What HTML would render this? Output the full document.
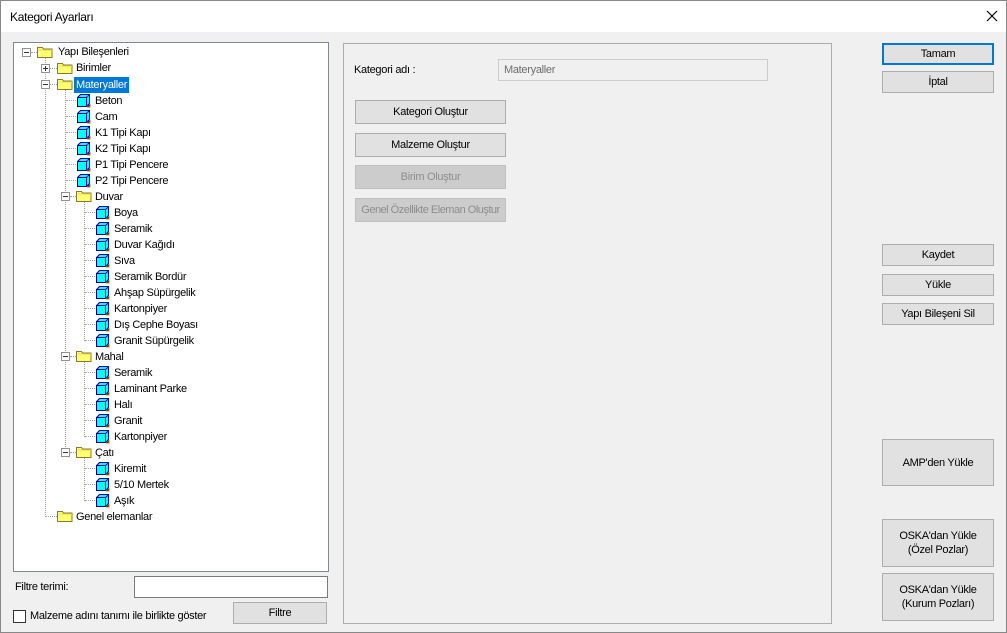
<!DOCTYPE html>
<html><head><meta charset="utf-8"><style>
*{box-sizing:border-box;margin:0;padding:0}
body{width:1007px;height:633px;background:#f0f0f0;font-family:"Liberation Sans",sans-serif;font-size:11px;letter-spacing:-0.3px;color:#000;position:relative;overflow:hidden;border:1px solid #888}
.a{position:absolute}
.title{left:0;top:0;width:1005px;height:31px;background:#fff}
.btn{position:absolute;background:#e1e1e1;border:1px solid #adadad;text-align:center;display:flex;align-items:center;justify-content:center;line-height:14px;white-space:nowrap}
.dis{color:#8d8d8d;background:#cccccc;border-color:#bfbfbf}
.tree{left:12px;top:41px;width:316px;height:530px;background:#fff;border:1px solid #828790}
.r{position:absolute;height:16px;line-height:16px;white-space:nowrap}
.vl{position:absolute;width:0;border-left:1px dotted #a0a0a0}
.hl{position:absolute;height:0;border-top:1px dotted #a0a0a0}
.ex{position:absolute;width:9px;height:9px;border:1px solid #919191;background:#fff}
.ex:before{content:"";position:absolute;left:1px;top:3px;width:5px;height:1px;background:#333}
.ex.p:after{content:"";position:absolute;left:3px;top:1px;width:1px;height:5px;background:#333}
.f{position:absolute;width:16px;height:12px}
.m{position:absolute;width:15px;height:15px}
</style></head><body>
<div class="a title"></div>
<div class="a" style="left:9px;top:9px;font-size:12px">Kategori Ayarları</div>
<svg class="a" style="left:985px;top:9px" width="12" height="12"><path d="M1 1L11 11M11 1L1 11" stroke="#000" stroke-width="1.2"/></svg>

<div class="a tree">
<svg width="0" height="0" style="position:absolute"><defs>
<symbol id="fo" viewBox="0 0 16 12"><path d="M0.5 1.5h5l1 1.5h8.5v8.5h-14.5z" fill="#ffff70" stroke="#8a7a30"/><path d="M1 4h14" stroke="#e8d850"/></symbol>
<symbol id="mt" viewBox="0 0 15 15"><path d="M1.5 4.5l3-3h9v9l-3 3h-9z" fill="#00ffff" stroke="#0000a0"/><path d="M1.5 4.5h9v9M10.5 4.5l3-3" fill="none" stroke="#0000a0"/><path d="M11 14h3v-3" stroke="#c08000"/></symbol>
</defs></svg>
</div>
<div class="a" style="left:0;top:0">
<div class="vl" style="left:44px;top:56px;height:460px"></div>
<div class="vl" style="left:64px;top:88px;height:364px"></div>
<div class="vl" style="left:83px;top:200px;height:140px"></div>
<div class="vl" style="left:83px;top:360px;height:76px"></div>
<div class="vl" style="left:83px;top:456px;height:44px"></div>
<div class="hl" style="left:30px;top:51px;width:6px"></div>
</div>
<div class="a" style="left:0;top:0">
<div class="ex" style="left:21px;top:47px"></div><svg class="f" style="left:36px;top:45px"><use href="#fo"/></svg><div class="r" style="left:57px;top:43px">Yapı Bileşenleri</div>
<div class="hl" style="left:49px;top:67px;width:7px"></div><div class="ex p" style="left:40px;top:63px"></div><svg class="f" style="left:56px;top:61px"><use href="#fo"/></svg><div class="r" style="left:75px;top:59px">Birimler</div>
<div class="hl" style="left:49px;top:83px;width:7px"></div><div class="ex" style="left:40px;top:79px"></div><svg class="f" style="left:56px;top:77px"><use href="#fo"/></svg><div class="r" style="left:73px;top:76px;background:#0078d7;color:#fff;padding:0 2px">Materyaller</div>
<div class="hl" style="left:65px;top:99px;width:10px"></div><svg class="m" style="left:75px;top:92px"><use href="#mt"/></svg><div class="r" style="left:94px;top:92px">Beton</div>
<div class="hl" style="left:65px;top:115px;width:10px"></div><svg class="m" style="left:75px;top:108px"><use href="#mt"/></svg><div class="r" style="left:94px;top:108px">Cam</div>
<div class="hl" style="left:65px;top:131px;width:10px"></div><svg class="m" style="left:75px;top:124px"><use href="#mt"/></svg><div class="r" style="left:94px;top:124px">K1 Tipi Kapı</div>
<div class="hl" style="left:65px;top:147px;width:10px"></div><svg class="m" style="left:75px;top:140px"><use href="#mt"/></svg><div class="r" style="left:94px;top:140px">K2 Tipi Kapı</div>
<div class="hl" style="left:65px;top:163px;width:10px"></div><svg class="m" style="left:75px;top:156px"><use href="#mt"/></svg><div class="r" style="left:94px;top:156px">P1 Tipi Pencere</div>
<div class="hl" style="left:65px;top:179px;width:10px"></div><svg class="m" style="left:75px;top:172px"><use href="#mt"/></svg><div class="r" style="left:94px;top:172px">P2 Tipi Pencere</div>
<div class="hl" style="left:69px;top:195px;width:6px"></div><div class="ex" style="left:60px;top:191px"></div><svg class="f" style="left:75px;top:189px"><use href="#fo"/></svg><div class="r" style="left:94px;top:188px">Duvar</div>
<div class="hl" style="left:84px;top:211px;width:10px"></div><svg class="m" style="left:94px;top:204px"><use href="#mt"/></svg><div class="r" style="left:113px;top:204px">Boya</div>
<div class="hl" style="left:84px;top:227px;width:10px"></div><svg class="m" style="left:94px;top:220px"><use href="#mt"/></svg><div class="r" style="left:113px;top:220px">Seramik</div>
<div class="hl" style="left:84px;top:243px;width:10px"></div><svg class="m" style="left:94px;top:236px"><use href="#mt"/></svg><div class="r" style="left:113px;top:236px">Duvar Kağıdı</div>
<div class="hl" style="left:84px;top:259px;width:10px"></div><svg class="m" style="left:94px;top:252px"><use href="#mt"/></svg><div class="r" style="left:113px;top:252px">Sıva</div>
<div class="hl" style="left:84px;top:275px;width:10px"></div><svg class="m" style="left:94px;top:268px"><use href="#mt"/></svg><div class="r" style="left:113px;top:268px">Seramik Bordür</div>
<div class="hl" style="left:84px;top:291px;width:10px"></div><svg class="m" style="left:94px;top:284px"><use href="#mt"/></svg><div class="r" style="left:113px;top:284px">Ahşap Süpürgelik</div>
<div class="hl" style="left:84px;top:307px;width:10px"></div><svg class="m" style="left:94px;top:300px"><use href="#mt"/></svg><div class="r" style="left:113px;top:300px">Kartonpiyer</div>
<div class="hl" style="left:84px;top:323px;width:10px"></div><svg class="m" style="left:94px;top:316px"><use href="#mt"/></svg><div class="r" style="left:113px;top:316px">Dış Cephe Boyası</div>
<div class="hl" style="left:84px;top:339px;width:10px"></div><svg class="m" style="left:94px;top:332px"><use href="#mt"/></svg><div class="r" style="left:113px;top:332px">Granit Süpürgelik</div>
<div class="hl" style="left:69px;top:355px;width:6px"></div><div class="ex" style="left:60px;top:351px"></div><svg class="f" style="left:75px;top:349px"><use href="#fo"/></svg><div class="r" style="left:94px;top:348px">Mahal</div>
<div class="hl" style="left:84px;top:371px;width:10px"></div><svg class="m" style="left:94px;top:364px"><use href="#mt"/></svg><div class="r" style="left:113px;top:364px">Seramik</div>
<div class="hl" style="left:84px;top:387px;width:10px"></div><svg class="m" style="left:94px;top:380px"><use href="#mt"/></svg><div class="r" style="left:113px;top:380px">Laminant Parke</div>
<div class="hl" style="left:84px;top:403px;width:10px"></div><svg class="m" style="left:94px;top:396px"><use href="#mt"/></svg><div class="r" style="left:113px;top:396px">Halı</div>
<div class="hl" style="left:84px;top:419px;width:10px"></div><svg class="m" style="left:94px;top:412px"><use href="#mt"/></svg><div class="r" style="left:113px;top:412px">Granit</div>
<div class="hl" style="left:84px;top:435px;width:10px"></div><svg class="m" style="left:94px;top:428px"><use href="#mt"/></svg><div class="r" style="left:113px;top:428px">Kartonpiyer</div>
<div class="hl" style="left:69px;top:451px;width:6px"></div><div class="ex" style="left:60px;top:447px"></div><svg class="f" style="left:75px;top:445px"><use href="#fo"/></svg><div class="r" style="left:94px;top:444px">Çatı</div>
<div class="hl" style="left:84px;top:467px;width:10px"></div><svg class="m" style="left:94px;top:460px"><use href="#mt"/></svg><div class="r" style="left:113px;top:460px">Kiremit</div>
<div class="hl" style="left:84px;top:483px;width:10px"></div><svg class="m" style="left:94px;top:476px"><use href="#mt"/></svg><div class="r" style="left:113px;top:476px">5/10 Mertek</div>
<div class="hl" style="left:84px;top:499px;width:10px"></div><svg class="m" style="left:94px;top:492px"><use href="#mt"/></svg><div class="r" style="left:113px;top:492px">Aşık</div>
<div class="hl" style="left:45px;top:515px;width:11px"></div><svg class="f" style="left:56px;top:509px"><use href="#fo"/></svg><div class="r" style="left:75px;top:508px">Genel elemanlar</div>
</div>

<div class="a" style="left:14px;top:580px">Filtre terimi:</div>
<div class="a" style="left:133px;top:575px;width:194px;height:22px;background:#fff;border:1px solid #7a7a7a"></div>
<div class="a" style="left:12px;top:609px;width:13px;height:13px;background:#fff;border:1px solid #333"></div>
<div class="a" style="left:29px;top:609px">Malzeme adını tanımı ile birlikte göster</div>
<div class="btn" style="left:232px;top:601px;width:94px;height:22px">Filtre</div>

<div class="a" style="left:342px;top:42px;width:489px;height:581px;border:1px solid #adadad"></div>
<div class="a" style="left:353px;top:63px">Kategori adı :</div>
<div class="a" style="left:497px;top:58px;width:270px;height:22px;border:1px solid #cccccc;color:#6d6d6d;padding:4px 5px">Materyaller</div>
<div class="btn" style="left:354px;top:99px;width:151px;height:24px">Kategori Oluştur</div>
<div class="btn" style="left:354px;top:132px;width:151px;height:24px">Malzeme Oluştur</div>
<div class="btn dis" style="left:354px;top:164px;width:151px;height:24px">Birim Oluştur</div>
<div class="btn dis" style="left:354px;top:197px;width:151px;height:24px;letter-spacing:-0.5px">Genel Özellikte Eleman Oluştur</div>

<div class="btn" style="left:881px;top:42px;width:112px;height:22px;border:2px solid #0078d7">Tamam</div>
<div class="btn" style="left:881px;top:70px;width:112px;height:22px">İptal</div>
<div class="btn" style="left:881px;top:243px;width:112px;height:22px">Kaydet</div>
<div class="btn" style="left:881px;top:273px;width:112px;height:22px">Yükle</div>
<div class="btn" style="left:881px;top:302px;width:112px;height:22px">Yapı Bileşeni Sil</div>
<div class="btn" style="left:881px;top:438px;width:112px;height:47px">AMP'den Yükle</div>
<div class="btn" style="left:881px;top:518px;width:112px;height:48px">OSKA'dan Yükle<br>(Özel Pozlar)</div>
<div class="btn" style="left:881px;top:572px;width:112px;height:48px">OSKA'dan Yükle<br>(Kurum Pozları)</div>
</body></html>
